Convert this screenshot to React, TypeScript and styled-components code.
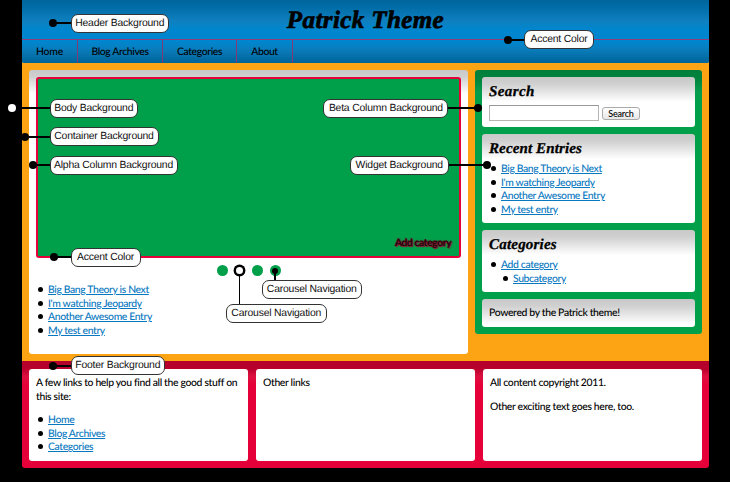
import React from "react";
import styled, { createGlobalStyle, css } from "styled-components";

const GlobalStyle = createGlobalStyle`
  * { box-sizing: border-box; }
  html, body { margin: 0; background: #000; }
  body {
    overflow: hidden;
    font: 500 10.4px/13.5px Lato, "Open Sans", sans-serif;
    letter-spacing: -0.37px;
    text-rendering: geometricPrecision;
    color: #000;
  }
`;

const green = "#009f4a";
const red = "#e60039";

const Page = styled.div`
  position: relative;
  width: 730px;
  height: 482px;
  padding: 0 21px 0 22px;
`;

const Container = styled.div`
  height: 468px;
  border-radius: 0 0 3px 3px;
  background: linear-gradient(#fda414 362px, transparent 362px);
`;

const Header = styled.header`
  height: 63px;
  border-radius: 0 0 2px 2px;
  overflow: hidden;
  background: #0086ce;
`;

const Title = styled.h1`
  height: 39px;
  margin: 0;
  text-align: center;
  font: italic bold 25px/42px "Liberation Serif", serif;
  letter-spacing: 0.4px;
  -webkit-text-stroke: 0.7px #000;
  background: linear-gradient(#00659b, #006ba5 15%, #0f80c0 55%, #0086ce 75%);
`;

const Nav = styled.nav`
  display: flex;
  height: 24px;
  border-top: 1px solid #8f3c7a;
  background: linear-gradient(#0086ce 10%, #0a7bb9 45%, #00659b 95%);
  background-clip: padding-box;
`;

const NavItem = styled.a<{ $width: number; $spacing?: number }>`
  width: ${(p) => p.$width}px;
  border-right: 1px solid #803a74;
  text-align: center;
  line-height: 25px;
  letter-spacing: ${(p) => p.$spacing ?? -0.37}px;
`;

const Main = styled.main`
  display: flex;
  align-items: flex-start;
  gap: 7px;
  height: 298px;
  padding: 7px 7px 0;
`;

const Alpha = styled.section`
  width: 439px;
  height: 284px;
  padding: 7px 7px 0;
  border-radius: 3px;
  background: linear-gradient(#c8c8c8, #d0d0d0 7px, #fff 24px);
`;

const Carousel = styled.div`
  display: flex;
  align-items: flex-end;
  justify-content: flex-end;
  height: 181px;
  padding: 0 8px 6px;
  border: 2px solid ${red};
  border-radius: 3px;
  background: ${green};
  font-weight: bold;
  letter-spacing: -0.45px;
  color: #20070b;
  text-shadow: 0 0 1px #b00030, 1px 1px 1px #a00030;
`;

const Dots = styled.div`
  display: flex;
  gap: 6.7px;
  height: 24px;
  padding: 7px 0 0 180.5px;
`;

const Dot = styled.span<{ $current?: boolean }>`
  width: 11px;
  height: 11px;
  border-radius: 50%;
  background: ${green};
  ${(p) => p.$current && css`
    background: #fff;
    border: 2.5px solid #000;
    box-shadow: 0 0 0 0.4px #000;
  `}
`;

const List = styled.ul`
  margin: 0;
  padding: 0 0 0 12px;
  list-style: none;
`;

const Item = styled.li`
  position: relative;
  &::before {
    content: "";
    position: absolute;
    left: -10.5px;
    top: 3.3px;
    width: 5px;
    height: 5px;
    border-radius: 50%;
    background: #000;
  }
`;

const Link = styled.a`
  color: #0878c0;
  text-decoration: underline;
  text-underline-offset: 1px;
`;

const AlphaList = styled.div`
  padding: 2px 0 0;
`;

const Beta = styled.aside`
  display: flex;
  flex-direction: column;
  gap: 7px;
  width: 227px;
  height: 264px;
  padding: 7px;
  border-radius: 3px;
  background: linear-gradient(#007f3b, #00823d 8px, #079c4d 22px, ${green} 30px);
`;

const Widget = styled.section<{ $height: number }>`
  height: ${(p) => p.$height}px;
  padding: 8px 7px 0;
  border-radius: 3px;
  background: linear-gradient(#c8c8c8, #d0d0d0 7px, #fff 25px);
`;

const Heading = styled.h2<{ $spacing: number }>`
  height: 21px;
  margin: 0;
  font: italic bold 15px/15px "Liberation Serif", serif;
  letter-spacing: ${(p) => p.$spacing}px;
  -webkit-text-stroke: 0.3px #000;
`;

const SearchRow = styled.div`
  display: flex;
  align-items: center;
  gap: 3px;
  margin-top: -1px;
`;

const Field = styled.input`
  width: 110px;
  height: 16px;
  padding: 0;
  border: 1px solid #b5b5b5;
  border-top-color: #999;
  background: #fff;
`;

const Button = styled.button`
  width: 38px;
  height: 13px;
  padding: 0;
  border: 1px solid #aaa;
  border-radius: 3px;
  background: linear-gradient(#fff, #e8e8e8);
  color: #000;
  font: 500 9px/11px Lato, sans-serif;
  letter-spacing: -0.2px;
`;

const Footer = styled.footer`
  display: flex;
  gap: 8px;
  height: 107px;
  padding: 8px 7px 7px;
  border-radius: 0 0 3px 3px;
  background: linear-gradient(#b3002b, #b9002d 8px, #dc103f 15px, ${red} 24px);
`;

const FooterBox = styled.section`
  flex: 1;
  min-width: 0;
  padding: 8px 7px 0;
  border-radius: 3px;
  background: #fff;
`;

const Text = styled.p<{ $spacing?: number }>`
  margin: 0 0 10px;
  white-space: nowrap;
  letter-spacing: ${(p) => p.$spacing ?? -0.34}px;
`;

const Overlay = styled.div`
  position: absolute;
  inset: 0;
  pointer-events: none;
`;

const Pill = styled.span<{ $x: number; $y: number; $w: number }>`
  position: absolute;
  left: ${(p) => p.$x}px;
  top: ${(p) => p.$y}px;
  width: ${(p) => p.$w}px;
  height: 19px;
  border: 1px solid #333;
  border-radius: 7px;
  background: #fff;
  text-align: center;
  white-space: nowrap;
  font: 10.4px/18px "Liberation Sans", Arial, sans-serif;
  letter-spacing: -0.2px;
  color: #111;
`;

const Pin = styled.span<{ $x: number; $y: number; $r: number; $white?: boolean }>`
  position: absolute;
  left: ${(p) => p.$x - p.$r}px;
  top: ${(p) => p.$y - p.$r}px;
  width: ${(p) => p.$r * 2}px;
  height: ${(p) => p.$r * 2}px;
  border-radius: 50%;
  background: ${(p) => (p.$white ? "#fff" : "#000")};
`;

const Leader = styled.span<{ $x: number; $y: number; $w: number; $h: number }>`
  position: absolute;
  left: ${(p) => p.$x}px;
  top: ${(p) => p.$y}px;
  width: ${(p) => p.$w}px;
  height: ${(p) => p.$h}px;
  background: #000;
`;

interface Note {
  text: string;
  x: number;
  y: number;
  w: number;
  px: number;
  py: number;
  r?: number;
  vertical?: boolean;
  white?: boolean;
}

const notes: Note[] = [
  { text: "Header Background", x: 70.5, y: 13.5, w: 98.5, px: 53, py: 23 },
  { text: "Accent Color", x: 524, y: 30, w: 70, px: 507.5, py: 39.5 },
  { text: "Body Background", x: 49.5, y: 98.5, w: 88.5, px: 12, py: 108, white: true },
  { text: "Beta Column Background", x: 323.4, y: 98.5, w: 125, px: 478, py: 108 },
  { text: "Container Background", x: 49.5, y: 127, w: 109, px: 25, py: 136.5 },
  { text: "Alpha Column Background", x: 49.5, y: 155.5, w: 128, px: 32.5, py: 165 },
  { text: "Widget Background", x: 350, y: 155.5, w: 98.5, px: 487, py: 165 },
  { text: "Accent Color", x: 70.5, y: 247.5, w: 70, px: 54, py: 257 },
  { text: "Footer Background", x: 70.5, y: 356, w: 94.5, px: 53, py: 365.5 },
  { text: "Carousel Navigation", x: 261.5, y: 280, w: 100.5, px: 275, py: 271, r: 3, vertical: true },
  { text: "Carousel Navigation", x: 226, y: 304.4, w: 100.5, px: 239.5, py: 275, r: 0, vertical: true },
];

const Callout = ({ text, x, y, w, px, py, r = 4, vertical, white }: Note) => {
  const left = px < x ? (white ? 21 : px) : x + w;
  const right = px < x ? x : px;
  return (
    <>
      {vertical ? (
        <Leader $x={px - 0.75} $y={py} $w={1.5} $h={y - py} />
      ) : (
        <Leader $x={left} $y={Math.floor(py - 0.25)} $w={right - left} $h={1.5} />
      )}
      {r > 0 && <Pin $x={px} $y={py} $r={r} $white={white} />}
      <Pill $x={x} $y={y} $w={w}>{text}</Pill>
    </>
  );
};

const Entries = () => (
  <List>
    <Item><Link href="#">Big Bang Theory is Next</Link></Item>
    <Item><Link href="#">I'm watching Jeopardy</Link></Item>
    <Item><Link href="#">Another Awesome Entry</Link></Item>
    <Item><Link href="#">My test entry</Link></Item>
  </List>
);

export default function App() {
  return (
    <Page>
      <GlobalStyle />
      <Container>
        <Header>
          <Title>Patrick Theme</Title>
          <Nav>
            <NavItem $width={56} $spacing={-0.2}>Home</NavItem>
            <NavItem $width={85}>Blog Archives</NavItem>
            <NavItem $width={74}>Categories</NavItem>
            <NavItem $width={56}>About</NavItem>
          </Nav>
        </Header>
        <Main>
          <Alpha>
            <Carousel>Add category</Carousel>
            <Dots>
              <Dot />
              <Dot $current />
              <Dot />
              <Dot />
            </Dots>
            <AlphaList><Entries /></AlphaList>
          </Alpha>
          <Beta>
            <Widget $height={50}>
              <Heading $spacing={0.4}>Search</Heading>
              <SearchRow>
                <Field aria-label="Search" />
                <Button>Search</Button>
              </SearchRow>
            </Widget>
            <Widget $height={89}>
              <Heading $spacing={0.12}>Recent Entries</Heading>
              <Entries />
            </Widget>
            <Widget $height={62}>
              <Heading $spacing={0.2}>Categories</Heading>
              <List>
                <Item>
                  <Link href="#">Add category</Link>
                  <List>
                    <Item><Link href="#">Subcategory</Link></Item>
                  </List>
                </Item>
              </List>
            </Widget>
            <Widget $height={28}>
              <Text>Powered by the Patrick theme!</Text>
            </Widget>
          </Beta>
        </Main>
        <Footer>
          <FooterBox>
            <Text>A few links to help you find all the good stuff on<br />this site:</Text>
            <List>
              <Item><Link href="#">Home</Link></Item>
              <Item><Link href="#">Blog Archives</Link></Item>
              <Item><Link href="#">Categories</Link></Item>
            </List>
          </FooterBox>
          <FooterBox><Text>Other links</Text></FooterBox>
          <FooterBox>
            <Text>All content copyright 2011.</Text>
            <Text>Other exciting text goes here, too.</Text>
          </FooterBox>
        </Footer>
      </Container>
      <Overlay>
        {notes.map((note) => <Callout key={`${note.x}-${note.y}`} {...note} />)}
      </Overlay>
    </Page>
  );
}
